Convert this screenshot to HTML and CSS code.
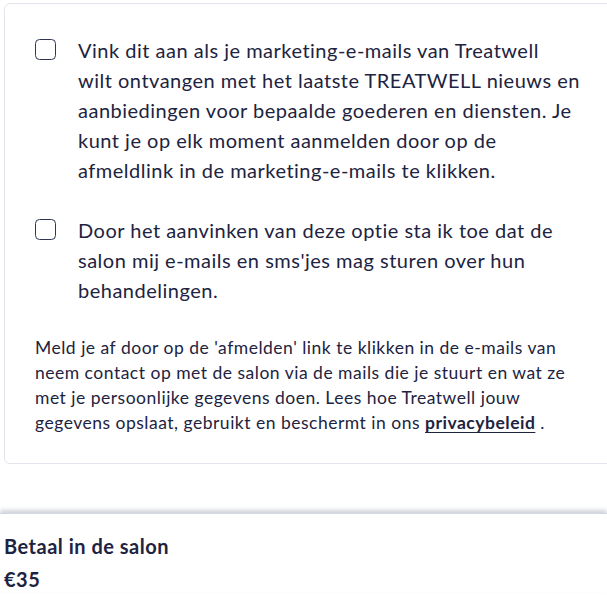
FILE: index.html
```html
<!DOCTYPE html>
<html lang="nl">
<head>
<meta charset="utf-8">
<link rel="stylesheet" href="styles.css">
</head>
<body>
<div class="card">
  <label class="option">
    <span class="box"></span>
    <span class="option-text">Vink dit aan als je marketing-e-mails van Treatwell<br>wilt ontvangen met het laatste TREATWELL nieuws en aanbiedingen voor bepaalde goederen en diensten. Je kunt je op elk moment aanmelden door op de afmeldlink in de marketing-e-mails te klikken.</span>
  </label>
  <label class="option">
    <span class="box"></span>
    <span class="option-text">Door het aanvinken van deze optie sta ik toe dat de salon mij e-mails en sms'jes mag sturen over hun behandelingen.</span>
  </label>
  <p class="note">Meld je af door op de 'afmelden' link te klikken in de e-mails van neem contact op met de salon via de mails die je stuurt en wat ze met je persoonlijke gegevens doen. Lees hoe Treatwell jouw gegevens opslaat, gebruikt en beschermt in ons <a href="#">privacybeleid</a> .</p>
</div>
<div class="footer">
  <div class="pay-label">Betaal in de salon</div>
  <div class="pay-price">€35</div>
</div>
</body>
</html>
```
FILE: styles.css
```css
html, body {
  margin: 0;
  padding: 0;
  background: #fff;
}
body {
  font-family: Lato, "Noto Sans", sans-serif;
  color: #1d2340;
  width: 607px;
  height: 597px;
  overflow: hidden;
}
.card {
  margin: 3px -20px 0 4px;
  border: 1px solid #e3e5ec;
  border-radius: 6px;
  padding: 31px 30px 28px 30px;
  display: flex;
  flex-direction: column;
  gap: 30px;
}
.option {
  display: flex;
  gap: 22px;
  font-size: 20px;
  line-height: 30px;
  letter-spacing: 0.5px;
  width: 557px;
}
.box {
  flex: none;
  width: 19px;
  height: 19px;
  border: 1.5px solid #2e3555;
  border-radius: 4.5px;
  margin-top: 4px;
  box-sizing: content-box;
}
.note {
  margin: 0;
  font-size: 17.5px;
  letter-spacing: 0.5px;
  line-height: 25px;
  width: 540px;
}
.note a {
  color: #1d2340;
  font-weight: 700;
  text-decoration: underline;
  text-underline-offset: 3px;
}
.footer {
  margin-top: 49px;
  border-top: 1px solid #d5d8e0;
  box-shadow: 0 -3px 4px rgba(120, 128, 150, 0.35);
  padding: 19px 4px 0;
}
.pay-label {
  font-size: 20px;
  font-weight: 700;
  letter-spacing: 0.5px;
  line-height: 26px;
}
.pay-price {
  font-size: 20px;
  font-weight: 700;
  letter-spacing: 0.5px;
  line-height: 26px;
  margin-top: 7px;
}
```
